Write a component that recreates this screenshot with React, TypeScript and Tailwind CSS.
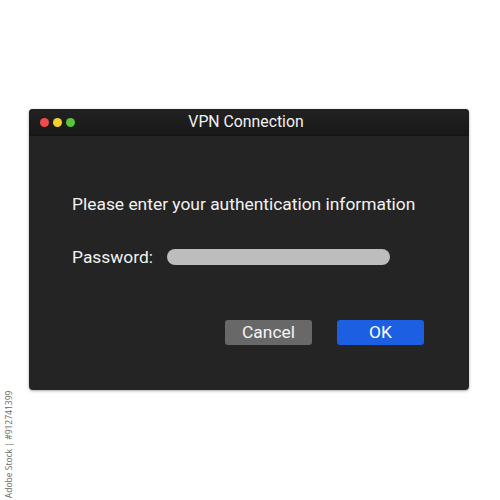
import React from "react";

export default function App() {
  return (
    <div
      className="relative w-[500px] h-[500px] bg-white pt-[109px] pl-[29px]"
      style={{ fontFamily: "Roboto, 'Liberation Sans', sans-serif" }}
    >
      <div className="w-[440px] h-[281px] rounded-[4px] bg-[#242424] shadow-[0_1px_3px_rgba(0,0,0,0.35)] overflow-hidden flex flex-col">
        <div className="h-[27px] grid grid-cols-[1fr_auto_1fr] items-center bg-gradient-to-b from-[#222222] to-[#181818] border-b border-[#141414]">
          <div className="flex items-center gap-[4px] pl-[11px]">
            <span className="w-[9px] h-[9px] rounded-full bg-[#f24a4a]" />
            <span className="w-[9px] h-[9px] rounded-full bg-[#f5d130]" />
            <span className="w-[9px] h-[9px] rounded-full bg-[#5cc43a]" />
          </div>
          <div className="text-[15.8px] text-[#f2f2f2] leading-none mr-[6px]">VPN Connection</div>
          <div />
        </div>
        <div className="flex flex-col pl-[43px] pr-[45px]">
          <div className="mt-[58px] text-[17.4px] leading-[20px] text-[#f2f2f2] whitespace-nowrap">
            Please enter your authentication information
          </div>
          <div className="mt-[34px] flex items-center h-[18px]">
            <span className="text-[17.4px] leading-[20px] text-[#f2f2f2] w-[95px]">Password:</span>
            <div className="w-[223px] h-[16px] rounded-full bg-[#bdbdbd]" />
          </div>
          <div className="mt-[54px] flex justify-end gap-[25px]">
            <button className="w-[87px] h-[25px] rounded-[3px] bg-[#686868] text-[17.4px] text-[#f4f4f4] leading-none">
              Cancel
            </button>
            <button className="w-[87px] h-[25px] rounded-[3px] bg-[#1c5fe3] text-[17.4px] text-white leading-none">
              OK
            </button>
          </div>
        </div>
      </div>
      <div className="absolute left-[2px] top-[388px] w-[16px] h-[112px] flex items-center justify-center">
        <span
          className="whitespace-nowrap text-[8.5px] text-[#666] -rotate-90"
          style={{ fontFamily: "'Open Sans', sans-serif" }}
        >
          Adobe Stock | #912741399
        </span>
      </div>
    </div>
  );
}
